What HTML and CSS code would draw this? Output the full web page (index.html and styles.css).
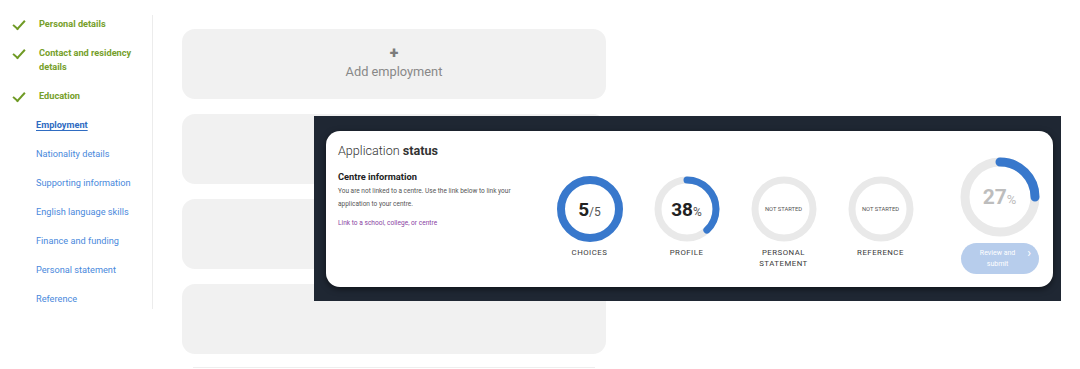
FILE: index.html
```html
<!DOCTYPE html>
<html lang="en">

<head>
    <meta charset="UTF-8">
    <title>Employment</title>
    <link rel="stylesheet" href="styles.css">
</head>

<body>
    <div class="page">
        <nav class="sidebar">
            <ul>
                <li class="done"><span class="tick"></span><span>Personal details</span></li>
                <li class="done"><span class="tick"></span><span>Contact and residency details</span></li>
                <li class="done"><span class="tick"></span><span>Education</span></li>
                <li class="current"><a href="#">Employment</a></li>
                <li><a href="#">Nationality details</a></li>
                <li><a href="#">Supporting information</a></li>
                <li><a href="#">English language skills</a></li>
                <li><a href="#">Finance and funding</a></li>
                <li><a href="#">Personal statement</a></li>
                <li><a href="#">Reference</a></li>
            </ul>
        </nav>

        <main class="content">
            <div class="card add">
                <span class="plus">+</span>
                <span>Add employment</span>
            </div>
            <div class="card"></div>
            <div class="card"></div>
            <div class="card"></div>
            <div class="rule"></div>
        </main>
    </div>

    <!-- screenshot of the status panel pasted over the page -->
    <div class="overlay">
        <div class="status">
            <div class="centre">
                <h2>Application <b>status</b></h2>
                <h3>Centre information</h3>
                <p>You are not linked to a centre. Use the link below to link your application to your centre.</p>
                <a href="#">Link to a school, college, or centre</a>
            </div>

            <div class="steps">
                <div class="step">
                    <div class="ring">
                        <svg width="66" height="66" viewBox="0 0 66 66">
                            <circle cx="33" cy="33" r="29" fill="none" stroke="#3878cc" stroke-width="8" />
                        </svg>
                        <span class="value"><b>5</b><small>/5</small></span>
                    </div>
                    <span class="label">CHOICES</span>
                </div>
                <div class="step">
                    <div class="ring">
                        <svg width="66" height="66" viewBox="0 0 66 66">
                            <circle cx="33" cy="33" r="29" fill="none" stroke="#e9e9e9" stroke-width="7" />
                            <circle cx="33" cy="33" r="29" fill="none" stroke="#3878cc" stroke-width="7"
                                stroke-linecap="round" pathLength="100" stroke-dasharray="38 100"
                                transform="rotate(-90 33 33)" />
                        </svg>
                        <span class="value"><b>38</b><small>%</small></span>
                    </div>
                    <span class="label">PROFILE</span>
                </div>
                <div class="step">
                    <div class="ring">
                        <svg width="66" height="66" viewBox="0 0 66 66">
                            <circle cx="33" cy="33" r="29" fill="none" stroke="#e9e9e9" stroke-width="7" />
                        </svg>
                        <span class="value pending">NOT STARTED</span>
                    </div>
                    <span class="label">PERSONAL<br>STATEMENT</span>
                </div>
                <div class="step">
                    <div class="ring">
                        <svg width="66" height="66" viewBox="0 0 66 66">
                            <circle cx="33" cy="33" r="29" fill="none" stroke="#e9e9e9" stroke-width="7" />
                        </svg>
                        <span class="value pending">NOT STARTED</span>
                    </div>
                    <span class="label">REFERENCE</span>
                </div>
            </div>

            <div class="overall">
                <div class="ring">
                    <svg width="80" height="80" viewBox="0 0 80 80">
                        <circle cx="40" cy="40" r="35" fill="none" stroke="#e9e9e9" stroke-width="9" />
                        <circle cx="40" cy="40" r="35" fill="none" stroke="#3878cc" stroke-width="9"
                            stroke-linecap="round" pathLength="100" stroke-dasharray="25 100"
                            transform="rotate(-90 40 40)" />
                    </svg>
                    <span class="value total"><b>27</b><small>%</small></span>
                </div>
                <button class="submit" disabled>
                    <span>Review and<br>submit</span>
                    <span class="chev">&#8250;</span>
                </button>
            </div>
        </div>
    </div>
</body>

</html>
```

FILE: styles.css
```css
body {
    font-family: Roboto, 'Liberation Sans', Arial, sans-serif;
    background: #fff;
    margin: 0;
    padding: 0;
}

.page {
    display: flex;
    align-items: flex-start;
}

/* left navigation */
.sidebar {
    width: 153px;
    box-sizing: border-box;
    margin-top: 15px;
    padding: 2px 12px 3px 12px;
    border-right: 1px solid #ececec;
}

.sidebar ul {
    list-style: none;
    margin: 0;
    padding: 0;
}

.sidebar li {
    display: flex;
    align-items: flex-start;
    font-size: 9.2px;
    line-height: 14px;
    margin-bottom: 15px;
    padding-left: 24px;
}

.sidebar li:last-child {
    margin-bottom: 0;
}

.sidebar li.done {
    padding-left: 0;
    color: #76a02a;
    font-weight: 700;
}

.sidebar .tick {
    flex: none;
    width: 10px;
    height: 5px;
    margin: 3px 14px 0 1px;
    border-left: 2px solid #6f9a24;
    border-bottom: 2px solid #6f9a24;
    transform: rotate(-48deg);
}

.sidebar a {
    color: #4a89dc;
    text-decoration: none;
}

.sidebar li.current a {
    color: #2f6cc2;
    font-weight: 700;
    text-decoration: underline;
    text-underline-offset: 2px;
}

/* employment cards */
.content {
    width: 424px;
    padding: 29px 0 0 29px;
}

.card {
    height: 70px;
    border-radius: 13px;
    background: #f1f1f1;
    margin-bottom: 15px;
}

.card.add {
    display: flex;
    flex-direction: column;
    align-items: center;
    justify-content: center;
    gap: 6px;
    color: #888;
    font-size: 12.8px;
    line-height: 15px;
}

.card.add .plus {
    font-size: 16px;
    font-weight: 900;
    line-height: 10px;
    color: #7c7c7c;
    margin-top: -2px;
}

.rule {
    margin: -2px 11px 0 11px;
    border-top: 1px solid #eeeeee;
}

/* status panel overlay */
.overlay {
    position: absolute;
    left: 314px;
    top: 116px;
    width: 747px;
    height: 185px;
    box-sizing: border-box;
    padding: 15px 8px 14px 12px;
    background: #1f2733;
}

.status {
    height: 100%;
    display: flex;
    align-items: flex-start;
    padding: 0 12px;
    background: #fff;
    border-radius: 14px;
    box-shadow: 0 2px 6px rgba(0, 0, 0, 0.5);
}

.centre {
    width: 203px;
    flex: none;
    padding-top: 10px;
    color: #333;
}

.centre h2 {
    margin: 0;
    font-size: 12.6px;
    line-height: 20px;
    font-weight: 300;
    color: #333;
}

.centre h2 b {
    font-weight: 700;
}

.centre h3 {
    margin: 10px 0 0 0;
    font-size: 9.3px;
    line-height: 12px;
    font-weight: 700;
    color: #222;
}

.centre p {
    max-width: 193px;
    margin: 2px 0 0 0;
    font-size: 6.5px;
    line-height: 13px;
    color: #555;
}

.centre a {
    display: block;
    margin-top: 7px;
    font-size: 6.6px;
    line-height: 10px;
    color: #8a3fa3;
    text-decoration: none;
}

.steps {
    display: flex;
    padding-top: 45px;
}

.step {
    width: 97px;
    display: flex;
    flex-direction: column;
    align-items: center;
}

.ring {
    display: grid;
    place-items: center;
}

.ring svg,
.ring .value {
    grid-area: 1 / 1;
}

.ring svg {
    display: block;
}

.value {
    color: #222;
    white-space: nowrap;
}

.value b {
    font-size: 19px;
    font-weight: 700;
}

.value small {
    font-size: 12px;
    color: #555;
}

.value.pending {
    font-size: 5.8px;
    color: #555;
}

.value.total b {
    font-size: 21px;
    color: #bdbdbd;
}

.value.total small {
    font-size: 13px;
    color: #bdbdbd;
}

.label {
    margin-top: 5px;
    font-size: 7.8px;
    line-height: 11px;
    letter-spacing: 0.5px;
    text-align: center;
    color: #3a3a3a;
}

.overall {
    width: 90px;
    margin-left: 29px;
    padding-top: 26px;
    display: flex;
    flex-direction: column;
    align-items: center;
}

.submit {
    margin-top: 6px;
    width: 78px;
    height: 31px;
    display: flex;
    align-items: flex-start;
    justify-content: center;
    gap: 12px;
    border: none;
    border-radius: 16px;
    background: #b7cdec;
    color: #fff;
    font-family: inherit;
    font-size: 7px;
    line-height: 11px;
    text-align: center;
    padding: 5px 0 0 12px;
}

.submit .chev {
    font-size: 13px;
    line-height: 10px;
}
```
